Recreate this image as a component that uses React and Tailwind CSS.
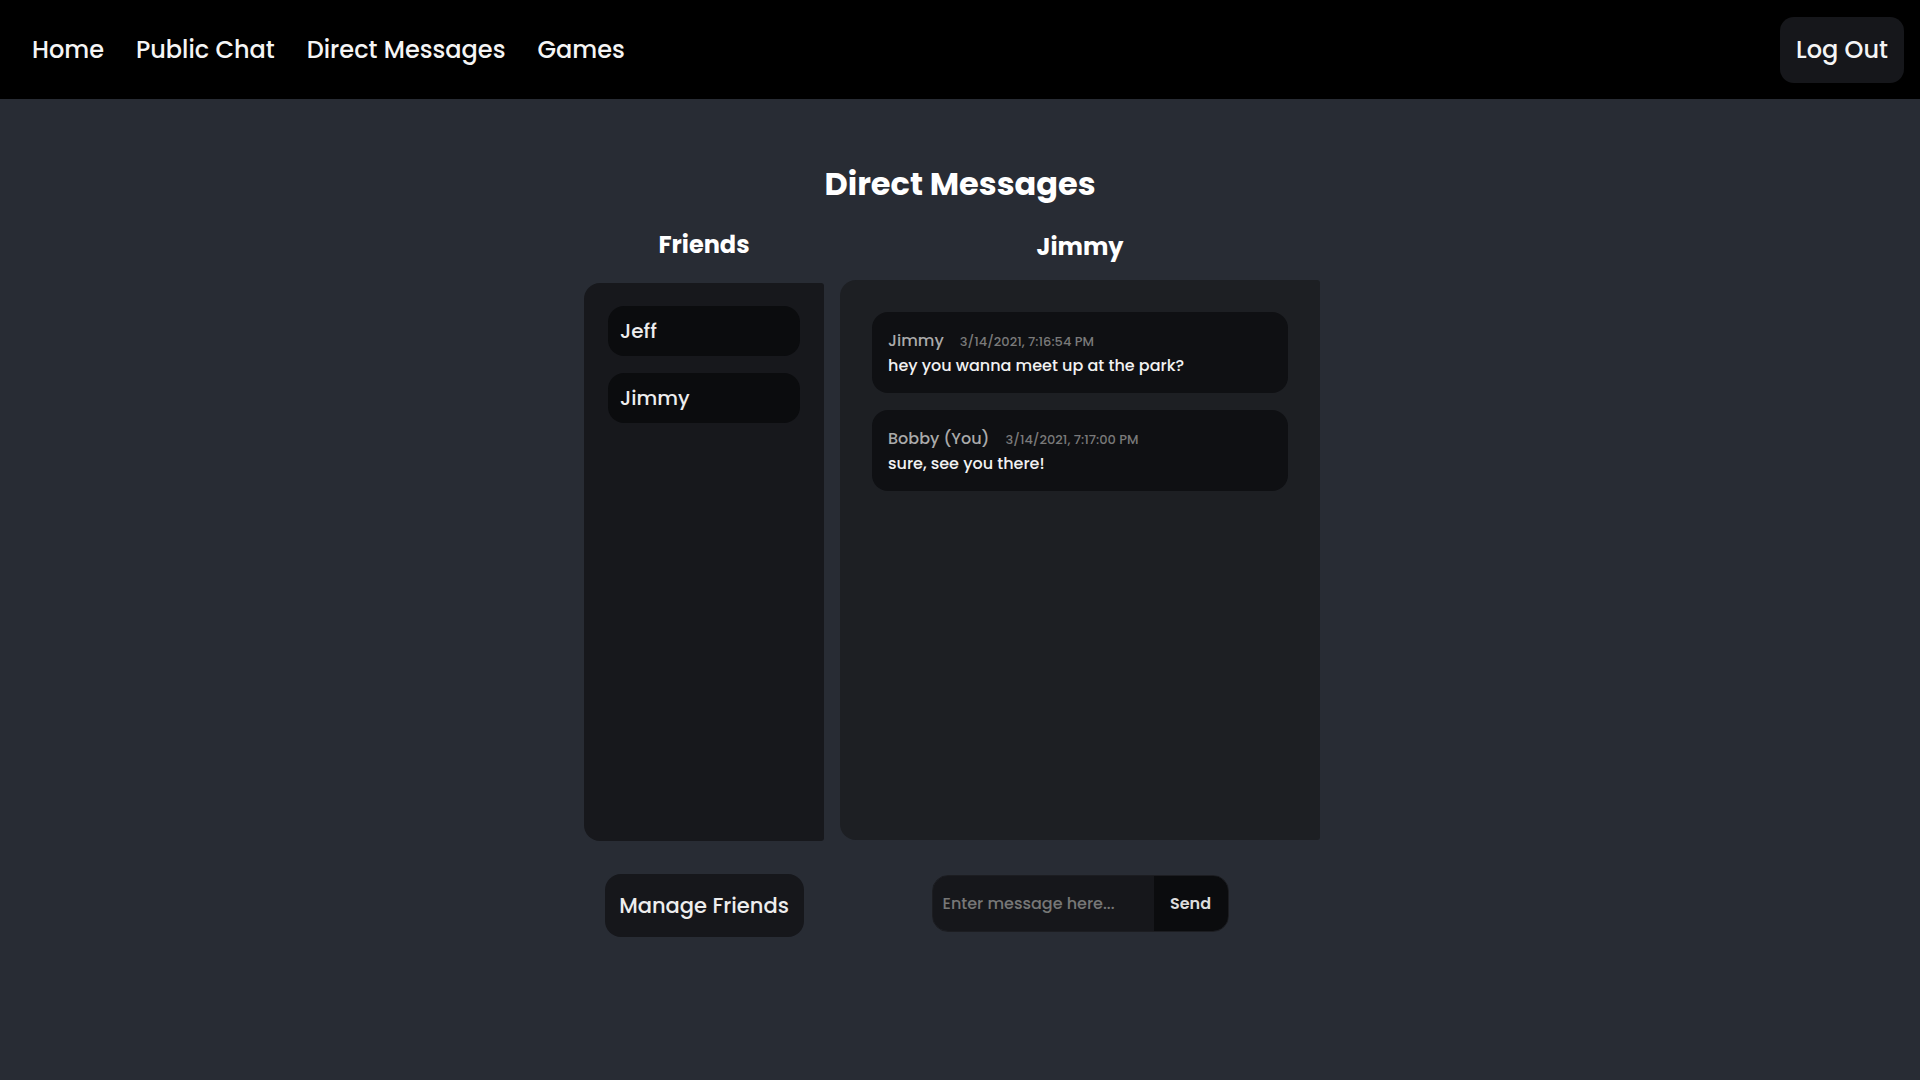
export default function App() {
  const font = { fontFamily: 'Poppins, Inter, "Noto Sans", sans-serif' };
  return (
    <div className="min-h-screen bg-[#282c34] text-white font-medium flex flex-col" style={font}>
      <nav className="h-[99px] bg-black flex items-center justify-between px-4 shrink-0">
        <div className="flex items-center text-[24px] text-[#f5f5f5]">
          <a className="px-4">Home</a>
          <a className="px-4">Public Chat</a>
          <a className="px-4">Direct Messages</a>
          <a className="px-4">Games</a>
        </div>
        <button className="w-[124px] h-[66px] rounded-[14px] bg-[#16171b] text-[24px] text-[#f5f5f5]">Log Out</button>
      </nav>
      <main className="flex flex-col items-center">
        <h1 className="mt-[61px] text-[32px] leading-[48px] font-bold">Direct Messages</h1>
        <div className="w-[752px] flex gap-4">
          <div className="w-[240px] flex flex-col items-center">
            <h2 className="mt-[19px] text-[24px] leading-[36px] font-bold">Friends</h2>
            <div className="mt-[20px] w-[240px] h-[558px] bg-[#17181c] rounded-l-[16px] rounded-r-[3px] p-6 pt-[23px] flex flex-col gap-[17px]">
              <div className="h-[50px] rounded-[16px] bg-[#0b0c0e] px-3 flex items-center text-[20px] text-[#eeeeee]">Jeff</div>
              <div className="h-[50px] rounded-[16px] bg-[#0b0c0e] px-3 flex items-center text-[20px] text-[#eeeeee]">Jimmy</div>
            </div>
            <button className="mt-[33px] w-[199px] h-[63px] rounded-[16px] bg-[#16171b] text-[21px] text-[#eeeeee]">Manage Friends</button>
          </div>
          <div className="w-[480px] flex flex-col items-center">
            <h2 className="mt-[21px] text-[24px] leading-[36px] font-bold">Jimmy</h2>
            <div className="mt-[15px] w-[480px] h-[560px] bg-[#1d1f23] rounded-l-[16px] rounded-r-[3px] p-8 flex flex-col gap-[17px]">
              <div className="rounded-[16px] bg-[#0f1013] px-4 pt-[17px] h-[81px]">
                <div className="text-[16px] leading-[24px] text-[#aaaaaa]">
                  Jimmy<span className="ml-4 text-[13px] text-[#7a7a7a]">3/14/2021, 7:16:54 PM</span>
                </div>
                <div className="text-[16px] leading-[24px] text-[#f2f2f2]">hey you wanna meet up at the park?</div>
              </div>
              <div className="rounded-[16px] bg-[#0f1013] px-4 pt-[17px] h-[81px]">
                <div className="text-[16px] leading-[24px] text-[#aaaaaa]">
                  Bobby (You)<span className="ml-4 text-[13px] text-[#7a7a7a]">3/14/2021, 7:17:00 PM</span>
                </div>
                <div className="text-[16px] leading-[24px] text-[#f2f2f2]">sure, see you there!</div>
              </div>
            </div>
            <div className="mt-[35px] flex h-[57px] rounded-[16px] overflow-hidden border border-[#1c1d21]">
              <input
                className="w-[221px] h-full bg-[#16171b] px-[10px] text-[16px] font-medium text-white placeholder-[#777777] outline-none"
                placeholder="Enter message here..."
                style={font}
              />
              <button className="w-[74px] h-full bg-[#0b0c0e] text-[16px] font-semibold text-[#dddddd]">Send</button>
            </div>
          </div>
        </div>
      </main>
    </div>
  );
}
